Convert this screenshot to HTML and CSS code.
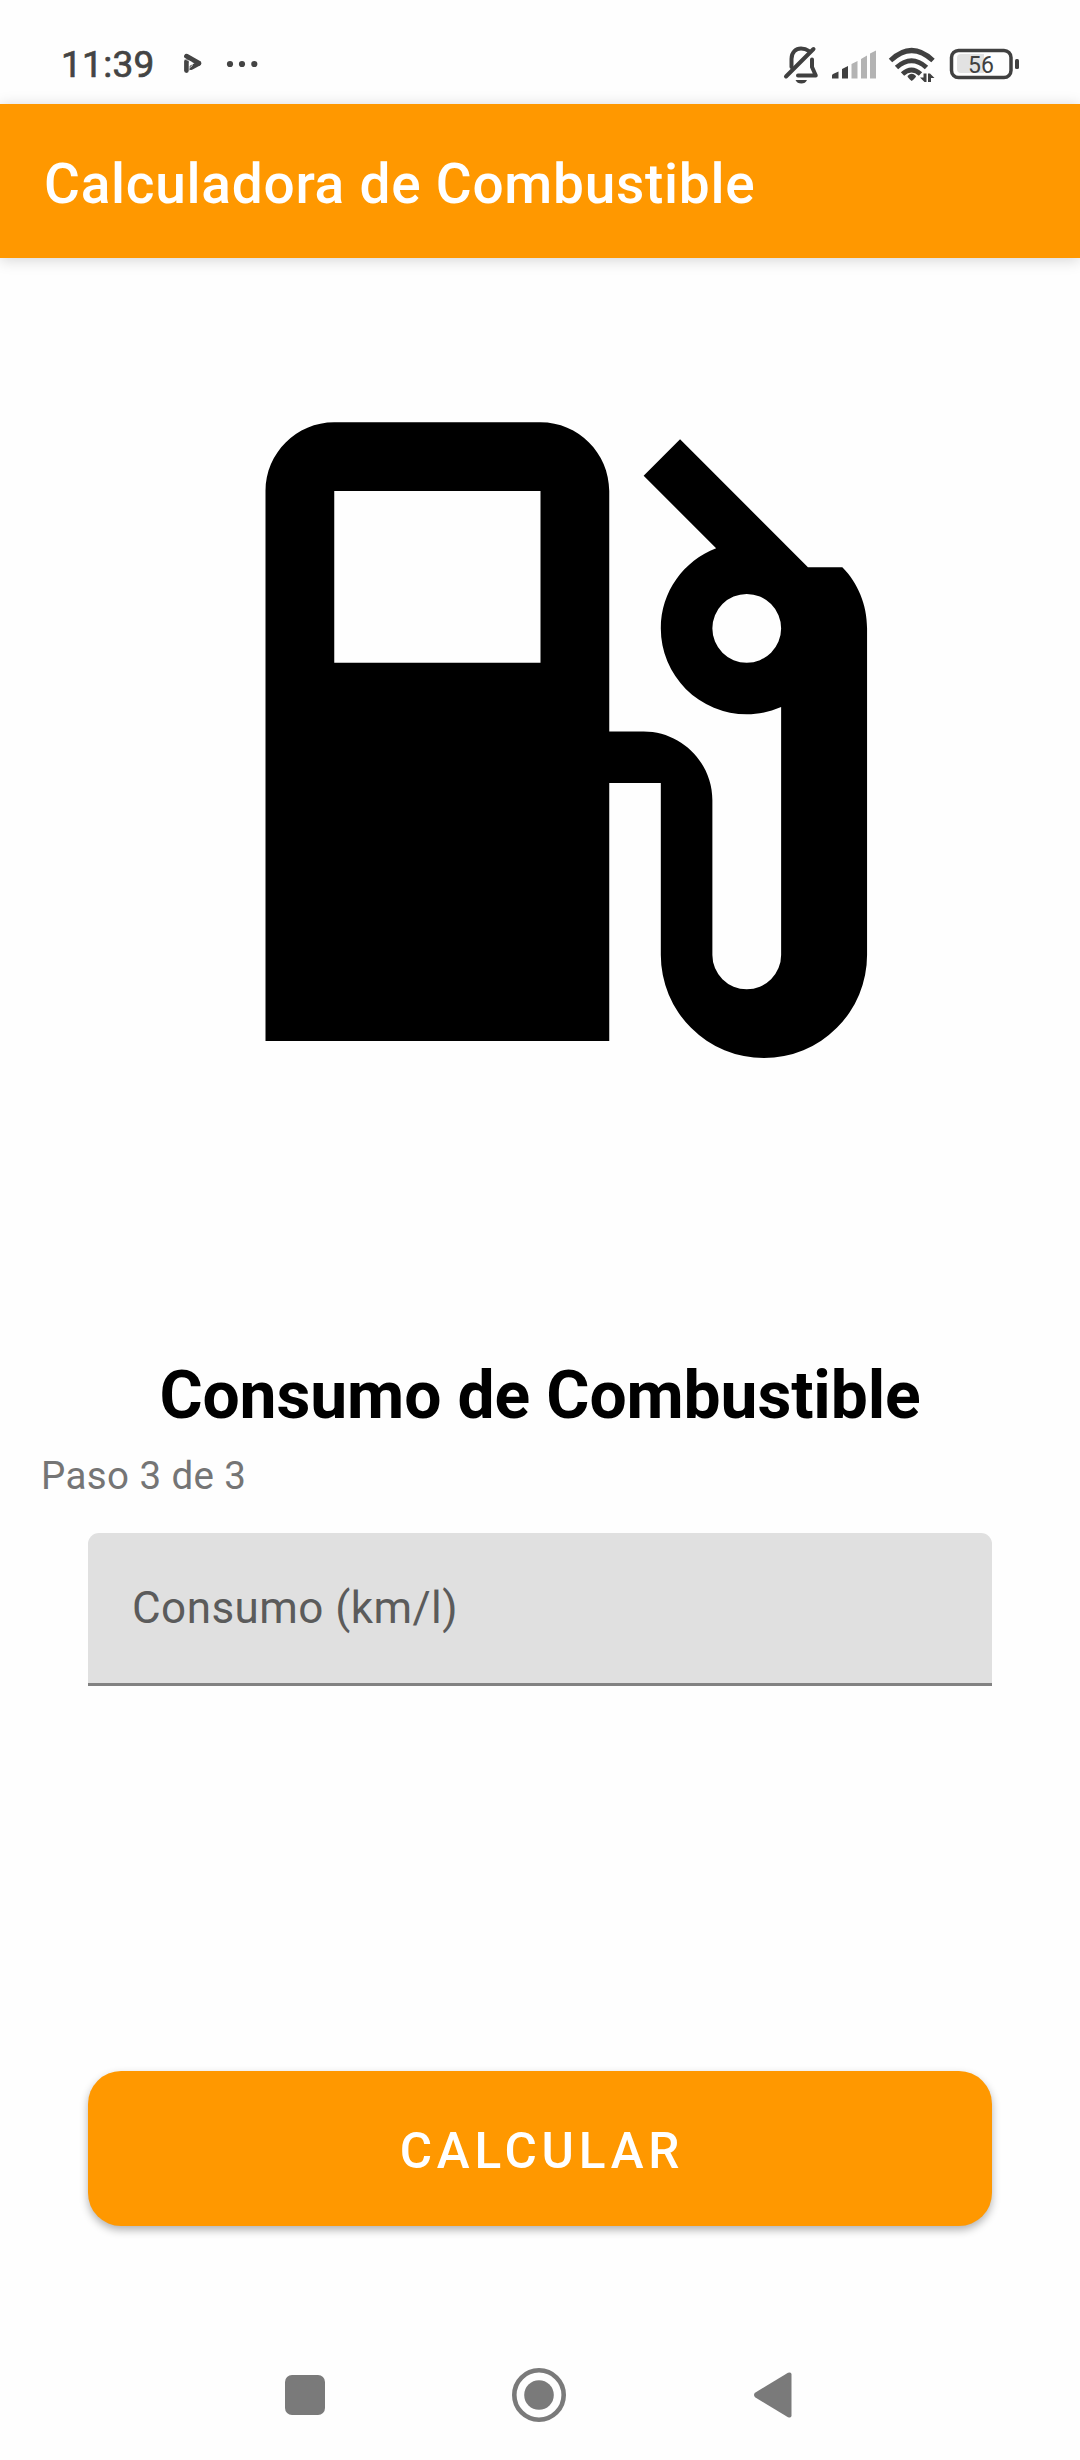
FILE: index.html
```html
<!DOCTYPE html>
<html lang="es">
<head>
<meta charset="utf-8">
<title>Calculadora de Combustible</title>
<link rel="stylesheet" href="styles.css">
</head>
<body>
<div class="screen">
  <div class="status-bar">
    <span class="clock">11:39</span>
    <svg class="play-icon" width="20" height="22" viewBox="0 0 20 22"><g fill="none" stroke="#444" stroke-width="4.800" stroke-linecap="round" stroke-linejoin="round"><path d="M3.500 3.200L15.800 10.200"/><path d="M3.500 8.500V17.500"/><path d="M8.500 14.500L15.800 10.500"/></g><path fill="#444" d="M6 15V17.500L9 16Z"/><path stroke="#fefefe" stroke-width=".9" d="M1 5.500L9 9.500M6.200 20V9.500M9.500 10.500L9 13L6.200 15" fill="none" opacity=".75"/></svg>
    <svg class="more-icon" width="32" height="8" viewBox="0 0 32 8" fill="#444"><circle cx="4" cy="4" r="3.1"/><circle cx="16" cy="4" r="3.1"/><circle cx="28.300" cy="4" r="3.1"/></svg>
    <svg class="system-icons" width="240" height="44" viewBox="780 42 240 44">
      <g fill="none" stroke="#404040" stroke-width="4" stroke-linecap="round" stroke-linejoin="round">
        <path d="M791.500 67V59C791.500 52 796 48.500 801 48.500C804 48.500 806.500 49.200 808.500 50.800M812 59.500V67L815.800 75.500H798" />
        <path d="M786 76.500L813.500 49"/>
      </g>
      <path fill="#404040" d="M795.500 80H807C806 82.500 804 83.500 801.300 83.500S796.500 82.500 795.500 80Z"/>
      <path fill="#404040" d="M832 78.500V75.500Q832 74.500 833 74L838.500 71.500V78.500ZM842 78.500V69L848 66V78.500Z"/>
      <path fill="#b3b3b3" d="M851.500 78.500V64L857.500 61V78.500ZM861 78.500V59L867 55.500V78.500ZM870 78.500V53.500L876 50.500V78.500Z"/>
      <g fill="none" stroke="#404040" stroke-width="5">
        <path d="M890.500 60.500Q911.500 40.500 933 60.500"/><path d="M896.500 67.500Q911.500 54 926.500 67.500"/><path d="M902.500 74Q911.500 66 920.500 74"/>
      </g>
      <path fill="#404040" d="M907.500 76Q911.700 71.500 916 76Q916 77.500 911.700 81Q907.500 77.500 907.500 76Z"/>
      <path fill="#404040" d="M923.500 73.500h3v8.500h-2l-4.500-4.500h3.500zM928 82V73.500h2l4.500 4.500h-3.500v4z"/>
      <rect x="951.500" y="50.500" width="59.500" height="27" rx="7" fill="none" stroke="#404040" stroke-width="3.500"/>
      <path fill="#e2e2e2" d="M961 54H984V73H961Q957 73 957 69V58Q957 54 961 54Z"/>
      <rect x="1015" y="59" width="4" height="10" rx="1.500" fill="#404040"/>
      <text class="battery-level" x="981" y="72.800">56</text>
    </svg>
  </div>
  <header class="app-bar"><h1 class="app-title">Calculadora de Combustible</h1></header>
  <main class="content">
    <svg class="pump" viewBox="0 0 24 24"><path fill-rule="evenodd" d="M20.780 7.220H19.780L16.060 3.500L15 4.560L17.110 6.670C16.170 7.030 15.500 7.930 15.500 9A2.500 2.500 0 0 0 18 11.500C18.360 11.500 18.690 11.420 19 11.290V18.500A1 1 0 0 1 17 18.500V14C17 12.900 16.100 12 15 12H14V5C14 3.900 13.100 3 12 3H6C4.900 3 4 3.900 4 5V21H14V13.500H15.500V18.500A3 3 0 0 0 21.500 18.500V9C21.500 8.310 21.230 7.670 20.780 7.220ZM12 10H6V5H12ZM18 10A1 1 0 1 1 18 8A1 1 0 0 1 18 10Z"/></svg>
    <h2 class="heading">Consumo de Combustible</h2>
    <p class="step">Paso 3 de 3</p>
    <div class="field">Consumo (km/l)</div>
    <button class="calculate" type="button">CALCULAR</button>
  </main>
  <nav class="nav-bar">
    <svg width="40" height="40" viewBox="0 0 40 40"><rect width="40" height="40" rx="7"/></svg>
    <svg width="54" height="54" viewBox="0 0 54 54"><circle cx="27" cy="27" r="24.700" fill="none" stroke="#7a7a7a" stroke-width="4.600"/><circle cx="27" cy="27" r="14.800"/></svg>
    <svg width="38" height="46" viewBox="0 0 38 46"><path d="M1 20.800L34 .8Q37.500-.5 37.500 2.500V43.500Q37.500 46.500 34 45.200L1 25.200Q-1 23 1 20.800Z"/></svg>
  </nav>
</div>
</body>
</html>
```
FILE: styles.css
```css
* { box-sizing: border-box; }
body { margin: 0; background: #fefefe; font-family: Roboto, sans-serif; }
h1, h2, p { margin: 0; }
svg { display: block; flex: none; }
.screen { display: flex; flex-direction: column; width: 1080px; height: 2460px; overflow: hidden; }

.status-bar { display: flex; align-items: flex-start; height: 104px; padding: 42px 60px 0 61px; }
.clock { width: 122px; font-size: 37px; font-weight: 400; line-height: 46px; letter-spacing: .3px; color: #444; -webkit-text-stroke: .7px #444; }
.play-icon { margin-top: 11px; }
.more-icon { margin: 18px 0 0 23px; }
.system-icons { margin-left: auto; }
.battery-level { font-size: 23px; fill: #404040; text-anchor: middle; }

.app-bar {
  display: flex;
  align-items: center;
  height: 154px;
  padding-left: 44px;
  background: #ff9800;
  box-shadow: 0 2px 14px rgba(0, 0, 0, .17);
}
.app-title { font-size: 55px; font-weight: 500; line-height: 64px; letter-spacing: .74px; color: #fff; padding-top: 5px; }

.content { display: flex; flex-direction: column; flex: 1; padding-top: 61px; }
.pump { width: 825px; height: 825px; align-self: center; }
.heading { margin-top: 213px; font-size: 66px; font-weight: 700; line-height: 78px; letter-spacing: -.13px; text-align: center; color: #000; }
.step { margin: 18px 0 0 41px; font-size: 38.5px; line-height: 46px; letter-spacing: .4px; color: #757575; }
.field {
  height: 153px;
  margin: 34px 88px 0;
  padding-left: 44px;
  border-bottom: 3px solid #828282;
  border-radius: 11px 11px 0 0;
  background: #e0e0e0;
  font-size: 44px;
  line-height: 150px;
  letter-spacing: .45px;
  color: #5b5b5b;
}
.calculate {
  height: 155px;
  margin: 385px 88px 0;
  padding: 5px 0 0 4px;
  border: 0;
  border-radius: 33px;
  background: #ff9800;
  box-shadow: 0 4px 8px rgba(0, 0, 0, .3);
  font: 500 49.5px/60px Roboto, sans-serif;
  letter-spacing: 4.8px;
  color: #fff;
}
.nav-bar { display: flex; align-items: center; justify-content: space-between; height: 130px; padding: 0 288.5px 0 284.5px; fill: #7a7a7a; }
```
